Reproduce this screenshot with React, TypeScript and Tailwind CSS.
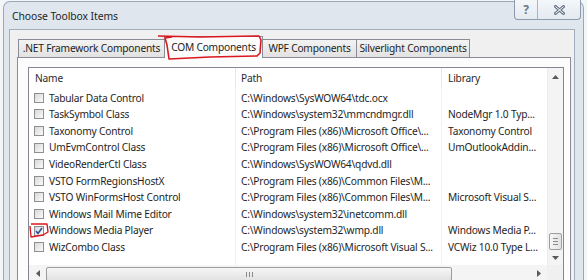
import React from "react";

const rows: { name: string; path: string; lib: string; checked?: boolean }[] = [
  { name: "Tabular Data Control", path: "C:\\Windows\\SysWOW64\\tdc.ocx", lib: "" },
  { name: "TaskSymbol Class", path: "C:\\Windows\\system32\\mmcndmgr.dll", lib: "NodeMgr 1.0 Typ..." },
  { name: "Taxonomy Control", path: "C:\\Program Files (x86)\\Microsoft Office\\...", lib: "Taxonomy Control" },
  { name: "UmEvmControl Class", path: "C:\\Program Files (x86)\\Microsoft Office\\...", lib: "UmOutlookAddin..." },
  { name: "VideoRenderCtl Class", path: "C:\\Windows\\SysWOW64\\qdvd.dll", lib: "" },
  { name: "VSTO FormRegionsHostX", path: "C:\\Program Files (x86)\\Common Files\\M...", lib: "" },
  { name: "VSTO WinFormsHost Control", path: "C:\\Program Files (x86)\\Common Files\\M...", lib: "Microsoft Visual S..." },
  { name: "Windows Mail Mime Editor", path: "C:\\Windows\\system32\\inetcomm.dll", lib: "" },
  { name: "Windows Media Player", path: "C:\\Windows\\system32\\wmp.dll", lib: "Windows Media P...", checked: true },
  { name: "WizCombo Class", path: "C:\\Program Files (x86)\\Microsoft Visual S...", lib: "VCWiz 10.0 Type L..." },
];

function Checkbox({ checked }: { checked?: boolean }) {
  return (
    <div className="w-[10px] h-[10px] border border-[#8f8f8f] bg-gradient-to-br from-[#d8d8d8] to-[#fbfbfb] flex items-center justify-center shrink-0">
      {checked && (
        <svg width="8" height="8" viewBox="0 0 8 8">
          <path d="M1 4 L3 6.5 L7 1" fill="none" stroke="#2b4f9e" strokeWidth="1.6" />
        </svg>
      )}
    </div>
  );
}

function Arrow({ dir }: { dir: "up" | "down" | "left" | "right" }) {
  const d =
    dir === "up" ? "M0 4 L3.5 0 L7 4 Z" : dir === "down" ? "M0 0 L7 0 L3.5 4 Z" : dir === "left" ? "M4 0 L4 7 L0 3.5 Z" : "M0 0 L4 3.5 L0 7 Z";
  const w = dir === "up" || dir === "down" ? 7 : 4;
  const h = dir === "up" || dir === "down" ? 4 : 7;
  return (
    <svg width={w} height={h} viewBox={`0 0 ${w} ${h}`}>
      <path d={d} fill="#5a5a5a" />
    </svg>
  );
}

export default function App() {
  return (
    <div
      className="w-[587px] h-[280px] overflow-hidden bg-[#f3f5f7] pl-[3px] pt-[1px] pr-[3px] flex relative text-[#1e1e1e]"
      style={{ fontFamily: '"Noto Sans", "Open Sans", sans-serif' }}
    >
      <div className="flex-1 flex flex-col border-l border-t border-r border-[#9aa7b8] rounded-t-[7px] bg-[#dfe6ee]">
        {/* title bar */}
        <div className="h-[27px] flex items-start shrink-0">
          <span className="ml-[8px] mt-[7px] text-[10.4px] tracking-[-0.1px] leading-[14px] whitespace-nowrap">Choose Toolbox Items</span>
          <div className="ml-auto mr-[2px] -mt-[2px] flex h-[20px] border border-t-0 border-[#8d9aab] rounded-b-[4px] bg-gradient-to-b from-[#f4f7fa] to-[#e4eaf1] overflow-hidden">
            <div className="w-[23px] flex items-center justify-center border-r border-[#aab5c3] text-[12px] leading-none text-[#6b7888] font-bold">
              ?
            </div>
            <div className="w-[42px] flex items-center justify-center">
              <svg width="11" height="10" viewBox="0 0 11 10">
                <path d="M1.5 1.5 L9.5 8.5 M9.5 1.5 L1.5 8.5" stroke="#6f7b8b" strokeWidth="3" strokeLinecap="square" />
                <path d="M1.5 1.5 L9.5 8.5 M9.5 1.5 L1.5 8.5" stroke="#f4f6f9" strokeWidth="1" />
              </svg>
            </div>
          </div>
        </div>

        {/* client area */}
        <div className="flex-1 ml-[5px] mr-[8px] border-l border-t border-r border-[#a3adbb] bg-[#f0f0f0] pt-[6px] pl-[7px] pr-[3px] flex flex-col">
          {/* tabs */}
          <div className="flex items-end h-[22px] -mb-[1px] pl-[1px] relative z-10 text-[10.2px] tracking-[-0.2px] leading-none whitespace-nowrap">
            <div className="w-[146px] h-[18px] mb-[1px] border-l border-t border-[#898c95] bg-gradient-to-b from-[#f3f3f3] to-[#e2e2e2] flex items-center justify-center">
              .NET Framework Components
            </div>
            <div className="w-[99px] h-[22px] border-l border-t border-r border-[#898c95] bg-[#fcfcfc] flex items-start justify-center pt-[5px]">
              COM Components
            </div>
            <div className="w-[93px] h-[18px] mb-[1px] border-t border-[#898c95] bg-gradient-to-b from-[#f3f3f3] to-[#e2e2e2] flex items-center justify-center">
              WPF Components
            </div>
            <div className="w-[114px] h-[18px] mb-[1px] border-l border-t border-r border-[#898c95] bg-gradient-to-b from-[#f3f3f3] to-[#e2e2e2] flex items-center justify-center">
              Silverlight Components
            </div>
          </div>

          {/* panel */}
          <div className="flex-1 border border-b-0 border-[#898c95] bg-[#fcfcfc] pt-[9px] pl-[10px] pr-[6px]">
            {/* list view */}
            <div className="border border-b-0 border-[#828790] bg-white flex flex-col text-[10.2px] tracking-[-0.2px] leading-none whitespace-nowrap">
              <div className="flex h-[197px]">
                <div className="flex-1 flex flex-col">
                  {/* header */}
                  <div className="flex h-[21px] shrink-0 text-[#2a2a2a]">
                    <div className="w-[207px] border-r border-[#e3e6ea] pl-[6px] flex items-center">Name</div>
                    <div className="w-[206px] border-r border-[#e3e6ea] pl-[5px] flex items-center">Path</div>
                    <div className="flex-1 pl-[6px] flex items-center">Library</div>
                  </div>
                  {/* rows */}
                  <div className="flex-1 flex flex-col pt-[0.5px]">
                    {rows.map((r) => (
                      <div key={r.name} className="flex h-[16.6px]">
                        <div className="w-[207px] border-r border-[#f1f1f1] pl-[5px] flex items-center gap-[5px]">
                          <Checkbox checked={r.checked} />
                          <span>{r.name}</span>
                        </div>
                        <div className="w-[206px] border-r border-[#f1f1f1] pl-[5px] flex items-center overflow-hidden">
                          {r.path}
                        </div>
                        <div className="flex-1 pl-[6px] flex items-center overflow-hidden">{r.lib}</div>
                      </div>
                    ))}
                    <div className="flex flex-1">
                      <div className="w-[207px] border-r border-[#f1f1f1]" />
                      <div className="w-[206px] border-r border-[#f1f1f1]" />
                    </div>
                  </div>
                </div>
                {/* vertical scrollbar */}
                <div className="w-[16px] bg-[#f4f4f4] border-l border-[#ececec] flex flex-col items-center">
                  <div className="h-[16px] flex items-center justify-center mt-[1px]">
                    <Arrow dir="up" />
                  </div>
                  <div className="flex-1" />
                  <div className="w-[13px] h-[17px] border border-[#9d9d9d] rounded-[2px] bg-gradient-to-r from-[#f6f6f6] to-[#e2e2e2] flex flex-col items-center justify-center gap-[2px]">
                    <div className="w-[5px] h-px bg-[#8a8a8a]" />
                    <div className="w-[5px] h-px bg-[#8a8a8a]" />
                    <div className="w-[5px] h-px bg-[#8a8a8a]" />
                  </div>
                  <div className="h-[15px] flex items-center justify-center">
                    <Arrow dir="down" />
                  </div>
                </div>
              </div>
              {/* horizontal scrollbar */}
              <div className="flex h-[16px]">
                <div className="flex-1 bg-[#f4f4f4] flex items-center">
                  <div className="w-[17px] flex items-center justify-center">
                    <Arrow dir="left" />
                  </div>
                  <div className="w-[406px] h-[14px] mt-[2px] border border-[#9d9d9d] rounded-[2px] bg-gradient-to-b from-[#f6f6f6] to-[#e2e2e2] flex items-center justify-center gap-[2px]">
                    <div className="w-px h-[5px] bg-[#8a8a8a]" />
                    <div className="w-px h-[5px] bg-[#8a8a8a]" />
                    <div className="w-px h-[5px] bg-[#8a8a8a]" />
                  </div>
                  <div className="flex-1" />
                  <div className="w-[17px] flex items-center justify-center">
                    <Arrow dir="right" />
                  </div>
                </div>
                <div className="w-[16px] bg-[#f0f0f0]" />
              </div>
            </div>
          </div>
        </div>
      </div>

      {/* red annotations */}
      <svg className="absolute left-0 top-0 z-20 pointer-events-none" width="587" height="280" viewBox="0 0 587 280">
        <path
          d="M158 36 L200 37 L259 36 L261 40 L260 53 L257 56 L210 57 L169 59 L167 45 L165 38 L172 37"
          fill="none"
          stroke="#d9181f"
          strokeWidth="1.6"
          strokeLinejoin="round"
        />
        <path
          d="M31 224 L47 224 L48 232 L43 235 L31 237 L30 226"
          fill="none"
          stroke="#d9181f"
          strokeWidth="1.4"
          strokeLinejoin="round"
        />
      </svg>
    </div>
  );
}
